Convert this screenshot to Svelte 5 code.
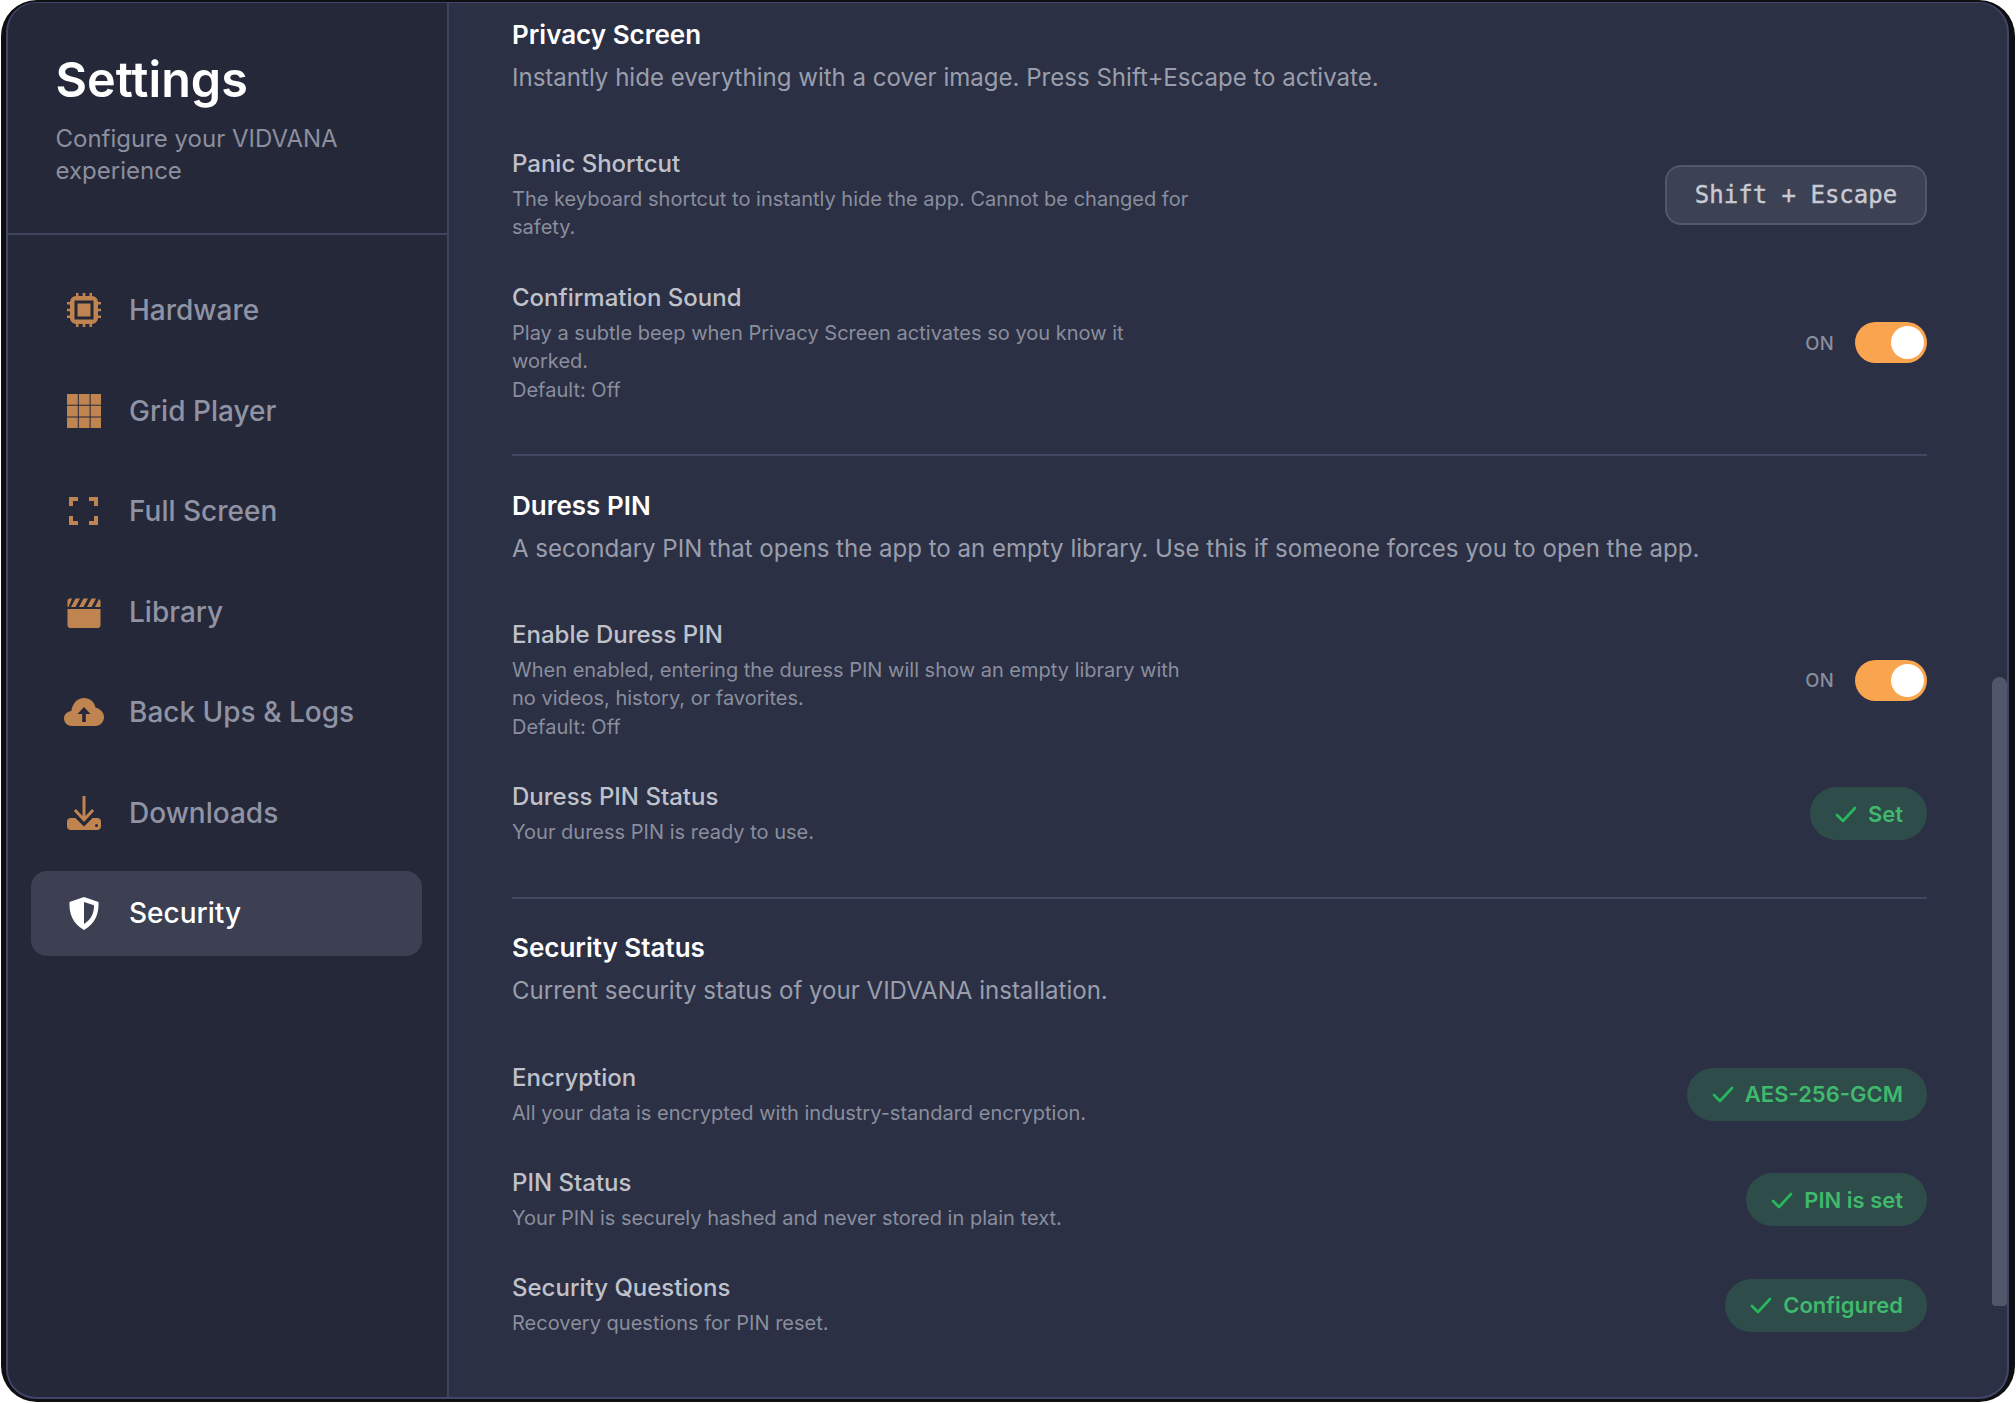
<script lang="ts">
	const navItems = [
		{ key: 'chip', label: 'Hardware' },
		{ key: 'grid', label: 'Grid Player' },
		{ key: 'full', label: 'Full Screen' },
		{ key: 'clap', label: 'Library' },
		{ key: 'cloud', label: 'Back Ups & Logs' },
		{ key: 'down', label: 'Downloads' },
		{ key: 'shield', label: 'Security', active: true }
	];

	const sections = [
		{
			title: 'Privacy Screen',
			desc: 'Instantly hide everything with a cover image. Press Shift+Escape to activate.',
			rows: [
				{
					label: 'Panic Shortcut',
					lines: ['The keyboard shortcut to instantly hide the app. Cannot be changed for safety.'],
					kbd: 'Shift + Escape'
				},
				{
					label: 'Confirmation Sound',
					lines: ['Play a subtle beep when Privacy Screen activates so you know it worked.', 'Default: Off'],
					toggle: true
				}
			]
		},
		{
			title: 'Duress PIN',
			desc: 'A secondary PIN that opens the app to an empty library. Use this if someone forces you to open the app.',
			rows: [
				{
					label: 'Enable Duress PIN',
					lines: ['When enabled, entering the duress PIN will show an empty library with no videos, history, or favorites.', 'Default: Off'],
					toggle: true
				},
				{
					label: 'Duress PIN Status',
					lines: ['Your duress PIN is ready to use.'],
					pill: 'Set'
				}
			]
		},
		{
			title: 'Security Status',
			desc: 'Current security status of your VIDVANA installation.',
			rows: [
				{
					label: 'Encryption',
					lines: ['All your data is encrypted with industry-standard encryption.'],
					pill: 'AES-256-GCM'
				},
				{
					label: 'PIN Status',
					lines: ['Your PIN is securely hashed and never stored in plain text.'],
					pill: 'PIN is set'
				},
				{
					label: 'Security Questions',
					lines: ['Recovery questions for PIN reset.'],
					pill: 'Configured'
				}
			]
		}
	];
</script>

<div class="frame">
	<div class="window">
		<aside class="sidebar">
			<header class="side-head">
				<h1>Settings</h1>
				<p>Configure your VIDVANA experience</p>
			</header>
			<nav>
				{#each navItems as item (item.key)}
					<div class="nav-item" class:active={item.active}>
						<svg class="nav-icon" viewBox="0 0 40 40" fill="currentColor">
							{#if item.key === 'chip'}
								<path d="M12 3h2.500v4H12zM18.700 3h2.600v4h-2.600zM25.500 3H28v4h-2.500zM12 33h2.500v4H12zM18.700 33h2.600v4h-2.600zM25.500 33H28v4h-2.500zM3 12h4v2.500H3zM3 18.700h4v2.600H3zM3 25.500h4V28H3zM33 12h4v2.500h-4zM33 18.700h4v2.600h-4zM33 25.500h4V28h-4z" />
								<path fill-rule="evenodd" d="M12 6h16a6 6 0 0 1 6 6v16a6 6 0 0 1-6 6H12a6 6 0 0 1-6-6V12a6 6 0 0 1 6-6zm-1.500 4.500v19h19v-19z" />
								<rect x="13.500" y="13.500" width="13" height="13" />
							{:else if item.key === 'grid'}
								<path d="M3 3h10.800v10.800H3zM14.800 3h10.800v10.800H14.800zM26.600 3H37v10.800H26.600zM3 14.800h10.800v10.800H3zM14.800 14.800h10.800v10.800H14.800zM26.600 14.800H37v10.800H26.600zM3 26.600h10.800V37H3zM14.800 26.600h10.800V37H14.800zM26.600 26.600H37V37H26.600z" />
							{:else if item.key === 'full'}
								<path d="M5 6h9v4H9v5H5zM25 6h9v9h-4v-5h-5zM5 25h4v5h5v4H5zM30 25h4v9h-9v-4h5z" />
							{:else if item.key === 'clap'}
								<path d="M3.500 17h33v16a3 3 0 0 1-3 3h-27a3 3 0 0 1-3-3z" />
								<path d="M3.500 15v-6a2.500 2.500 0 0 1 2.500-2.500h2L4.500 15zM7 15l4.500-8.500h4.500L11.500 15zM15 15l4.500-8.500H24L19.500 15zM23 15l4.500-8.500H32L27.500 15zM31 15l4-8a2.500 2.500 0 0 1 1.500 2v6z" />
							{:else if item.key === 'cloud'}
								<path fill-rule="evenodd" d="M20 6c6 0 10.500 4 11.500 9.500C35.500 16.500 40 20 40 25c0 5-4 9-8.500 9H8c-4.500 0-8-3.500-8-7.500 0-3.800 3.200-6.800 7.300-7.400C8.500 11 13.500 6 20 6zm0 9-6.500 7h4.700v8h3.600v-8h4.700z" />
							{:else if item.key === 'down'}
								<path d="M18.500 3h3v20l6.500-7 2.200 2L20 29 9.800 18l2.200-2 6.500 7z" />
								<path fill-rule="evenodd" d="M7 25h4.500l8.500 8.500 8.500-8.500H33a4 4 0 0 1 4 4v4a4 4 0 0 1-4 4H7a4 4 0 0 1-4-4v-4a4 4 0 0 1 4-4zm25.500 6a1.500 1.500 0 1 0 0 3 1.500 1.500 0 0 0 0-3z" />
							{:else}
								<path fill-rule="evenodd" d="M20 4l14.500 5c.5 11-2.500 21-14.500 28C8 30 5 20 5.500 9zm0 5v22c8-5 10-11.500 10-18.800z" />
							{/if}
						</svg>
						<span>{item.label}</span>
					</div>
				{/each}
			</nav>
		</aside>

		<main class="content">
			{#each sections as section, i}
				<section class:ruled={i > 0}>
					<h2>{section.title}</h2>
					<p class="section-desc">{section.desc}</p>
					<div class="rows">
						{#each section.rows as row}
							<div class="row">
								<div class="info">
									<div class="label">{row.label}</div>
									{#each row.lines as line}
										<div class="hint">{line}</div>
									{/each}
								</div>
								{#if row.kbd}
									<span class="kbd">{row.kbd}</span>
								{:else if row.toggle}
									<div class="toggle-wrap">
										<span class="on">ON</span>
										<span class="toggle"></span>
									</div>
								{:else if row.pill}
									<span class="pill">
										<svg viewBox="0 0 24 24" fill="none" stroke="currentColor" stroke-width="2.600" stroke-linecap="round" stroke-linejoin="round"><path d="M3 13l6 6L21 6" /></svg>
										{row.pill}
									</span>
								{/if}
							</div>
						{/each}
					</div>
				</section>
			{/each}
			<div class="scroll-thumb"></div>
		</main>
	</div>
</div>

<style>
	:global(body) {
		background: #fff;
	}

	.frame {
		box-sizing: border-box;
		width: 2014px;
		height: 1402px;
		margin-left: 1px;
		padding: 2px 6px 3px 5px;
		display: flex;
		background: #0f0f11;
		border-radius: 36px;
	}

	.window {
		flex: 1;
		min-width: 0;
		display: flex;
		overflow: hidden;
		background: #2b3044;
		border: 2px solid #41456a;
		border-top-width: 1px;
		border-radius: 30px;
		font-family: Inter, "Liberation Sans", sans-serif;
	}

	.sidebar {
		box-sizing: border-box;
		flex: 0 0 auto;
		width: 441px;
		background: #252839;
		border-right: 2px solid #3f4360;
	}

	.side-head {
		box-sizing: border-box;
		height: 232px;
		padding: 48px 40px 0 47.500px;
		border-bottom: 2px solid #3f4360;
	}

	h1 {
		margin: 0;
		font-size: 48.500px;
		line-height: 58px;
		font-weight: 600;
		color: #fff;
	}

	.side-head p {
		margin: 14px 0 0;
		font-size: 24px;
		line-height: 32px;
		color: #8b8f9e;
	}

	nav {
		display: flex;
		flex-direction: column;
		gap: 16px;
		padding: 33px 25px 0 23px;
	}

	.nav-item {
		display: flex;
		align-items: center;
		gap: 25px;
		height: 84.500px;
		padding-left: 33px;
		border-radius: 16px;
		font-size: 28px;
		font-weight: 500;
		color: #8f93a4;
	}

	.nav-item.active {
		background: #3d4052;
		color: #fff;
	}

	.nav-icon {
		flex: 0 0 auto;
		width: 40px;
		height: 40px;
		color: #bf8450;
	}

	.active .nav-icon {
		color: #fff;
	}

	.content {
		position: relative;
		flex: 1;
		padding: 15.500px 80px 0 63px;
		min-width: 0;
	}

	section.ruled {
		margin-top: 50px;
		padding-top: 33.500px;
		border-top: 2px solid #434862;
	}

	h2 {
		margin: 0;
		font-size: 26px;
		line-height: 32px;
		font-weight: 600;
		color: #fff;
	}

	.section-desc {
		margin: 11px 0 0;
		font-size: 24.050px;
		line-height: 32px;
		color: #9a9eac;
	}

	.rows {
		display: flex;
		flex-direction: column;
		gap: 40px;
		margin-top: 54.500px;
	}

	.row {
		display: flex;
		align-items: center;
		justify-content: space-between;
	}

	.info {
		width: 682px;
	}

	.label {
		font-size: 24px;
		line-height: 32px;
		font-weight: 500;
		color: #c0c2cb;
	}

	.hint {
		font-size: 20.030px;
		line-height: 28.400px;
		color: #8a8e9d;
	}

	.label + .hint {
		margin-top: 5px;
	}

	.kbd {
		box-sizing: border-box;
		width: 262px;
		height: 60px;
		display: flex;
		align-items: center;
		justify-content: center;
		background: #3d4154;
		border: 2px solid #535769;
		border-radius: 16px;
		font-family: "DejaVu Sans Mono", monospace;
		font-size: 24px;
		-webkit-text-stroke: 0.4px #c8cad2;
		color: #c8cad2;
	}

	.toggle-wrap {
		display: flex;
		align-items: center;
		gap: 21px;
	}

	.on {
		font-size: 18.500px;
		font-weight: 500;
		letter-spacing: 0.3px;
		color: #8a8e9d;
	}

	.toggle {
		position: relative;
		display: block;
		width: 72px;
		height: 41px;
		border-radius: 21px;
		background: #f9a550;
	}

	.toggle::after {
		content: "";
		position: absolute;
		right: 3px;
		top: 4px;
		width: 33px;
		height: 33px;
		border-radius: 50%;
		background: #fff;
	}

	.pill {
		display: inline-flex;
		align-items: center;
		gap: 10px;
		height: 53px;
		padding: 0 24px;
		border-radius: 27px;
		background: #2e4c4a;
		font-size: 22px;
		font-weight: 600;
		color: #3fb96c;
	}

	.pill svg {
		width: 24px;
		height: 24px;
		color: #27b85c;
	}

	.scroll-thumb {
		position: absolute;
		right: 0;
		top: 674px;
		width: 15px;
		height: 629px;
		border-radius: 8px 8px 4px 4px;
		background: #51566a;
	}
</style>
